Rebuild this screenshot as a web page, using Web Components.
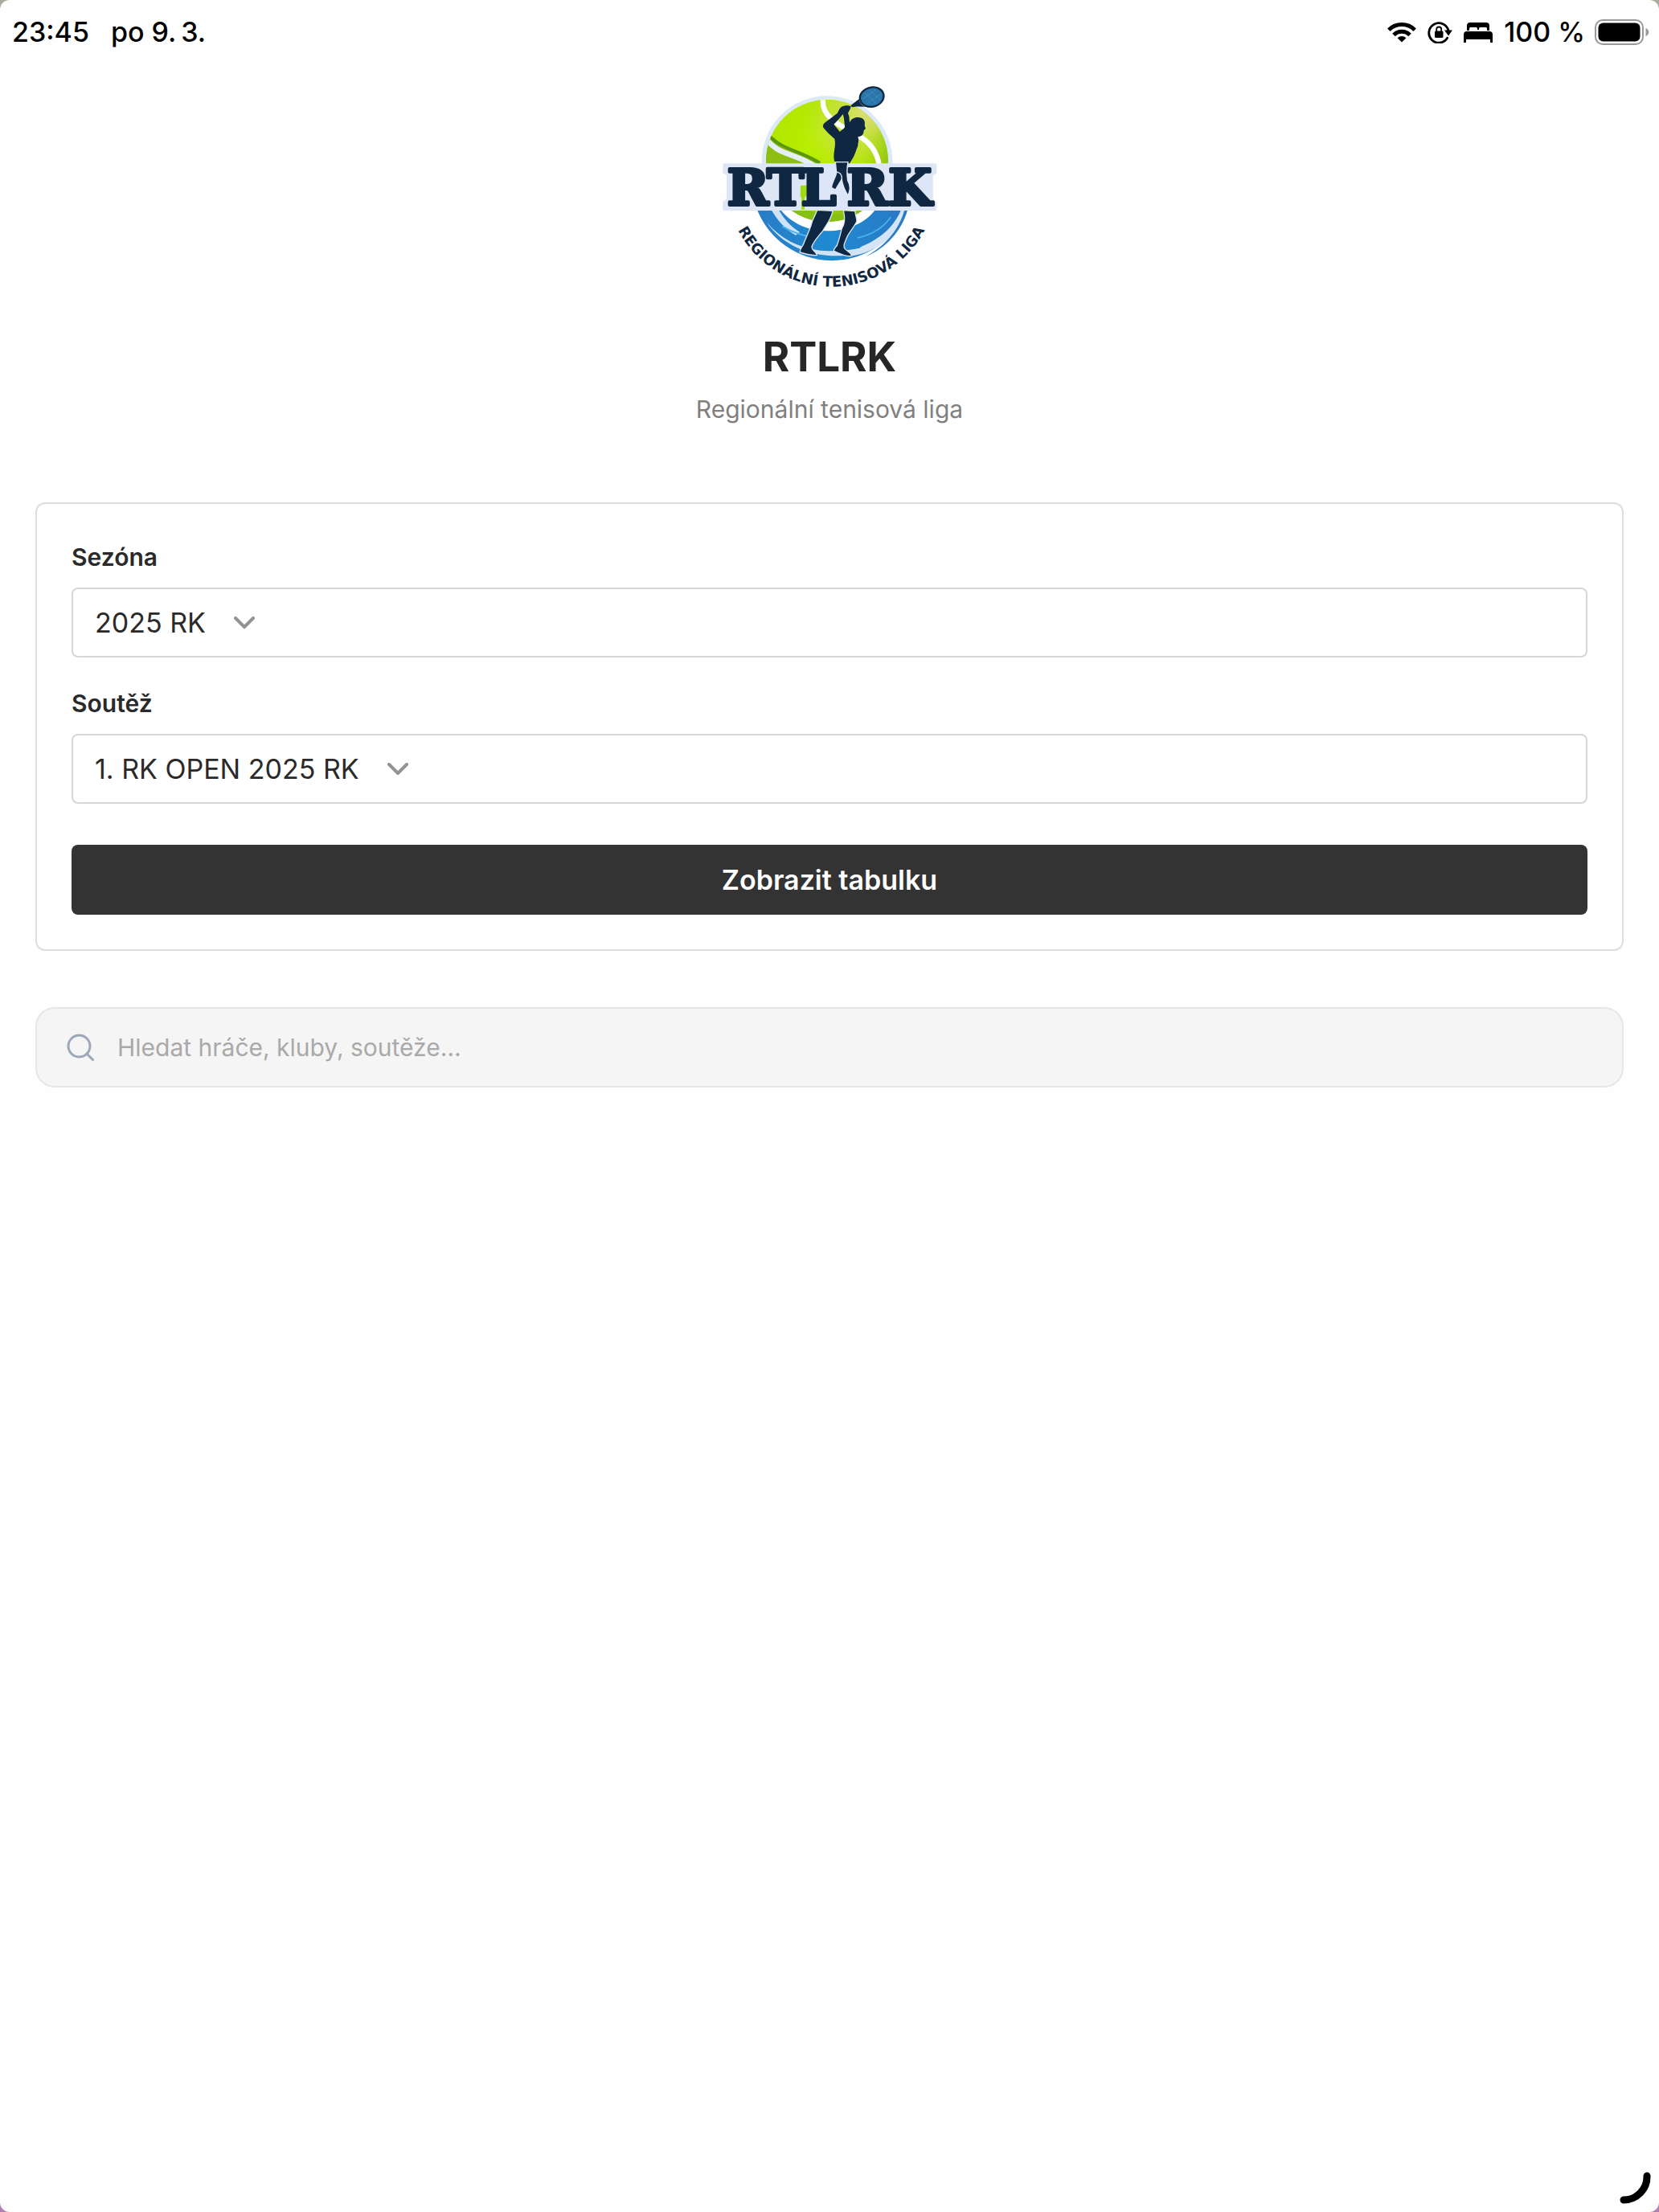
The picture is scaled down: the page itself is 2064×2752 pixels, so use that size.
<!DOCTYPE html>
<html lang="cs">
<head>
<meta charset="utf-8">
<meta name="viewport" content="width=device-width, initial-scale=1">
<title>RTLRK</title>
<style>
html { background: linear-gradient(#a9ac9c 50%, #b07fb2 50%); }
body { margin: 0; font-family: Inter, "Liberation Sans", sans-serif; color: #2a2a2a; }
</style>
</head>
<body>
<league-app></league-app>

<script>
const define = (name, html, setup) => customElements.define(name, class extends HTMLElement {
  constructor() {
    super();
    this.attachShadow({ mode: 'open' }).innerHTML = html;
  }
  connectedCallback() { if (setup) setup(this, this.shadowRoot); }
});

/* Device status bar */
define('status-bar', `
<style>
:host { display: flex; justify-content: space-between; align-items: center; height: 80px; padding: 0 12px 0 15px; box-sizing: border-box; font-size: 34px; line-height: 40px; font-weight: 500; color: #000; }
.side { display: flex; align-items: center; }
.left { gap: 27px; }
.right { gap: 14px; }
.level { display: flex; align-items: center; gap: 12px; }
svg { display: block; }
</style>
<div class="side left"><span>23:45</span><span>po 9.&thinsp;3.</span></div>
<div class="side right">
  <svg width="36" height="26" viewBox="0 0 36 26" fill="none" stroke="#000" stroke-width="5">
    <path d="M1.8 10.2a23 23 0 0 1 32.4 0"/><path d="M8 16.4a14.2 14.2 0 0 1 20 0"/>
    <path d="M18 25.5l-5.4-5.3a7.6 7.6 0 0 1 10.8 0z" fill="#000" stroke="none"/>
  </svg>
  <svg width="31" height="28" viewBox="0 0 31 28" fill="none" stroke="#000">
    <path d="M24.6 21.3A12.3 12.3 0 1 1 26 12" stroke-width="2.8" stroke-linecap="round"/>
    <path d="M21 11.5h10l-5 7z" fill="#000" stroke="none"/>
    <rect x="9" y="12.5" width="10.5" height="8.5" rx="1.5" fill="#000" stroke="none"/>
    <path d="M11.2 13v-2.5a3 3 0 0 1 6 0V13" stroke-width="1.8"/>
  </svg>
  <svg width="36" height="25" viewBox="0 0 36 25">
    <path d="M4 10V4a4 4 0 0 1 4-4h20a4 4 0 0 1 4 4v6h-3V7.5a1.500 1.500 0 0 0-1.500-1.500H20.5A1.5 1.5 0 0 0 19 7.5V9h-2V7.5A1.5 1.5 0 0 0 15.5 6h-7A1.5 1.5 0 0 0 7 7.5V10z"/>
    <path d="M0 25V15a4 4 0 0 1 4-4h28a4 4 0 0 1 4 4v10h-3v-4H3v4z"/>
  </svg>
  <div class="level">
    <span>100 %</span>
    <svg width="68" height="32" viewBox="0 0 68 32">
      <rect x="1" y="1" width="59" height="30" rx="9" fill="none" stroke="#999" stroke-width="2"/>
      <rect x="4.5" y="4.5" width="52" height="23" rx="6"/>
      <path d="M63.5 11c5 1.500 5 8.500 0 10z" fill="#999"/>
    </svg>
  </div>
</div>`);

/* League emblem */
define('league-logo', `
<style>
:host { display: block; width: 300px; height: 280px; }
svg { display: block; width: 100%; height: 100%; }
.word { font: bold 186px "DejaVu Serif", serif; }
.arc { font: bold 54px "DejaVu Sans", sans-serif; }
</style>
<svg viewBox="6 0 900 840" role="img" aria-label="RTLRK">
  <defs>
    <radialGradient id="ball" cx=".4" cy=".35" r=".7"><stop offset="0" stop-color="#baf000"/><stop offset=".6" stop-color="#b0e400"/><stop offset="1" stop-color="#84b814"/></radialGradient>
    <radialGradient id="glow" cx=".7" cy=".2" r=".42"><stop offset="0" stop-color="#e2dd8e"/><stop offset=".5" stop-color="#d4de68" stop-opacity=".8"/><stop offset="1" stop-color="#c0e430" stop-opacity="0"/></radialGradient>
    <linearGradient id="wave" x1="0" x2="1"><stop offset="0" stop-color="#2a7cc6"/><stop offset=".5" stop-color="#1f8ad2"/><stop offset="1" stop-color="#2a78c2"/></linearGradient>
    <clipPath id="clip"><circle cx="447" cy="330" r="228"/></clipPath>
    <path id="curve" d="M70 407A393 393 0 0 0 856 407"/>
  </defs>
  <path d="M183 505A300 300 0 0 0 747 505z" fill="url(#wave)"/>
  <path d="M222 560C290 660 420 700 545 680L575 655C440 684 310 664 222 560z" fill="#cfe3f8"/>
  <path d="M535 686L575 650C650 620 700 570 722 515H745C720 600 640 670 535 686z" fill="#d5e5f8"/>
  <path d="M590 688C670 655 725 590 747 515H735C715 590 660 650 590 688z" fill="#2a7cc6"/>
  <path d="M240 515C262 552 290 585 330 608L345 596C310 575 285 545 268 515z" fill="#cfe3f8"/>
  <path d="M280 575C330 605 370 614 410 617" fill="none" stroke="#49b4ef" stroke-width="6"/>
  <path d="M560 618C620 605 660 575 685 540" fill="none" stroke="#49b4ef" stroke-width="5"/>
  <circle cx="447" cy="332" r="244" fill="#dce9f8"/>
  <path d="M265 500C300 556 370 592 447 592C524 592 600 560 635 500z" fill="#fff"/>
  <circle cx="447" cy="330" r="228" fill="url(#ball)"/>
  <g clip-path="url(#clip)" fill="none">
    <path d="M434 80C415 165 500 200 560 235C610 260 635 300 642 350H700V80z" fill="url(#glow)"/>
    <circle cx="447" cy="330" r="228" fill="url(#glow)" opacity=".6"/>
    <path d="M215 225C260 290 350 280 425 345L380 380L200 370z" fill="#8dbe12"/>
    <path d="M222 225C265 285 340 290 420 338" stroke="#5d9611" stroke-width="12"/>
    <path d="M215 240C255 310 330 300 400 350" stroke="#e5effa" stroke-width="20"/>
    <path d="M434 90C415 165 500 200 560 235C610 260 635 300 642 350" stroke="#fff" stroke-width="19"/>
    <path d="M250 500C350 590 560 590 640 500L600 480C560 540 440 560 300 480z" fill="#86c010"/>
  </g>
  <g fill="#0f2741" stroke-linejoin="round">
    <path d="M535 124L566 100C570 125 590 130 600 128C580 130 565 124 540 130z"/>
    <ellipse cx="614" cy="92" rx="45" ry="36" transform="rotate(-14 614 92)" fill="#2a75a9" stroke="#0f2741" stroke-width="7"/>
    <path d="M590 76l42 42M605 66l40 36M580 100l50-35M595 118l55-40" stroke="#4c93bd" stroke-width="2"/>
    <path d="M497 132C507 121 527 122 536 127C534 140 526 147 525 153C531 164 530 174 531 188C538 169 560 164 578 172C588 177 589 190 587 199L591 210L584 217C584 237 571 240 562 241C567 253 562 265 562 274L550 306C543 324 529 338 524 360L522 400L478 380L480 342C468 323 473 303 475 285C478 269 477 260 475 248C459 236 443 219 432 205C430 198 434 192 440 187L485 153C489 148 490 140 497 132zM506 156C496 169 484 183 472 194L495 222C503 213 515 208 513 202C511 186 511 169 506 156z" fill-rule="evenodd"/>
  </g>
  <g class="word" stroke-linejoin="round">
    <path d="M72 340H850Q856 340 856 346V376L842 386V476L856 486V510Q856 516 850 516H64Q58 516 58 510V482L72 472V384L58 376V346Q58 340 64 340z" fill="#dce6f6"/>
    <path d="M348 422h23v38l-8 8v44h-12v-44l-4-8z" fill="#a0da10"/>
    <text x="74 222 350 520 676" y="496" stroke="#0f2741" stroke-width="12" fill="#0f2741">RTLRK</text>
  </g>
  <g fill="#0f2741" stroke="#dce6f6" stroke-width="4">
    <path d="M478 335H525C519 365 522 390 524 404C536 424 531 447 525 460L508 430L500 402L478 438L463 430C467 407 478 395 482 375z"/>
    <path d="M477 370C498 374 503 382 502 400C505 426 519 446 522 466V514" fill="none"/>
    <path d="M410 514L468 517C463 549 442 572 431 592C413 612 397 632 390 650C388 665 406 668 409 682C393 685 370 679 346 672C344 660 356 650 360 638C370 613 383 586 388 568C393 545 404 533 410 514z"/>
    <path d="M508 515L552 518C551 530 558 543 558 556C549 577 528 598 520 618C513 636 505 648 514 659C524 670 538 674 538 685C518 691 494 676 472 667C471 654 485 651 486 640C493 620 497 602 502 583C517 562 513 537 508 515z"/>
  </g>
  <text class="arc" fill="#0f2741" text-anchor="middle"><textPath href="#curve" startOffset="50%">REGIONÁLNÍ TENISOVÁ LIGA</textPath></text>
</svg>`);

/* Emblem with the league name beneath */
define('league-header', `
<style>
:host { display: flex; flex-direction: column; align-items: center; padding: 10px 0 94px; text-align: center; }
h1 { margin: 42px 0 11px; font-size: 51px; line-height: 64px; font-weight: 700; color: #262626; }
p { margin: 0; font-size: 30px; line-height: 44px; color: #808080; }
</style>
<league-logo></league-logo>
<h1><slot name="title"></slot></h1>
<p><slot></slot></p>`);

/* Labelled drop-down; options are passed as a "|"-separated list */
define('select-field', `
<style>
:host { display: flex; flex-direction: column; gap: 15px; }
label { font-size: 30px; line-height: 46px; font-weight: 600; color: #2a2a2a; }
.box { display: flex; align-items: center; gap: 35px; height: 87px; padding: 0 27px; box-sizing: border-box; border: 2px solid #d6d6d6; border-radius: 8px; background: #fff; }
select { appearance: none; margin: 0; padding: 0; border: 0; background: none; font: inherit; font-size: 34px; line-height: 44px; color: #2a2a2a; }
svg { display: block; flex: none; pointer-events: none; }
</style>
<label for="choice"></label>
<div class="box">
  <select id="choice"></select>
  <svg width="26" height="16" viewBox="0 0 26 16" fill="none" stroke="#939393" stroke-width="4" stroke-linecap="round" stroke-linejoin="round"><path d="M2 2l11 11L24 2"/></svg>
</div>`, (el, root) => {
  root.querySelector('label').textContent = el.getAttribute('label');
  root.querySelector('select').replaceChildren(
    ...el.getAttribute('options').split('|').map(text => new Option(text)));
});

define('action-button', `
<style>
:host { display: block; }
button { display: block; width: 100%; height: 87px; margin: 0; border: 0; border-radius: 8px; background: #333; color: #fff; font: inherit; font-size: 34px; line-height: 44px; font-weight: 600; }
</style>
<button type="button"><slot></slot></button>`);

define('filter-card', `
<style>
:host { display: flex; flex-direction: column; gap: 34px; padding: 43px; border: 2px solid #dedede; border-radius: 12px; background: #fff; }
::slotted(action-button) { margin-top: 17px; }
</style>
<slot></slot>`);

define('search-field', `
<style>
:host { display: block; }
label { display: flex; align-items: center; gap: 29px; height: 100px; padding: 0 37px; box-sizing: border-box; border: 2px solid #e6e6e6; border-radius: 24px; background: #f5f5f5; }
svg { display: block; flex: none; }
input { flex: 1; min-width: 0; margin: 0; padding: 0; border: 0; outline: 0; background: none; font: inherit; font-size: 30px; line-height: 44px; color: #2a2a2a; }
input::placeholder { color: #a9a9a9; opacity: 1; }
</style>
<label>
  <svg width="34" height="34" viewBox="0 0 34 34" fill="none" stroke="#9ca8b7" stroke-width="3" stroke-linecap="round"><circle cx="15.5" cy="15.5" r="13.5"/><path d="M25 25l7.5 7.5"/></svg>
  <input type="text" placeholder="Hledat hráče, kluby, soutěže..." aria-label="Hledat">
</label>`);

define('league-app', `
<style>
:host { display: block; position: relative; min-height: 100vh; border-radius: 12px; background: #fefefe; overflow: hidden; }
main { display: flex; flex-direction: column; gap: 70px; padding: 0 44px; }
.corner { position: absolute; right: 10px; bottom: 10px; }
</style>
<status-bar></status-bar>
<league-header><span slot="title">RTLRK</span>Regionální tenisová liga</league-header>
<main>
  <filter-card>
    <select-field label="Sezóna" options="2025 RK"></select-field>
    <select-field label="Soutěž" options="1. RK OPEN 2025 RK"></select-field>
    <action-button>Zobrazit tabulku</action-button>
  </filter-card>
  <search-field></search-field>
</main>
<svg class="corner" width="40" height="40" viewBox="0 0 40 40" fill="none" stroke="#000" stroke-width="9" stroke-linecap="round" aria-hidden="true"><path d="M35 5A29 29 0 0 1 6 35"/></svg>`);
</script>
</body>
</html>
